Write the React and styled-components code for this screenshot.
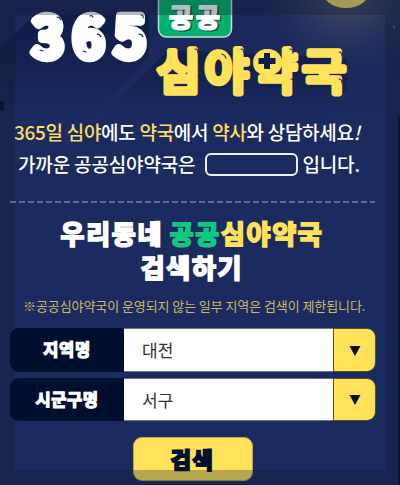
import React, { useState } from "react";
import styled, { createGlobalStyle } from "styled-components";

const Global = createGlobalStyle`
  * { box-sizing: border-box; }
  body {
    margin: 0;
    background: #1b2a5e;
    font-family: "Noto Sans CJK KR", sans-serif;
    overflow: hidden;
  }
`;

const Page = styled.main`
  position: relative;
  width: 400px;
  height: 485px;
  overflow: hidden;
  color: #fff;
  background: linear-gradient(90deg, transparent 398px, #0b1538 398px), #1b2a5f;
`;

const Frame = styled.div`
  position: absolute;
  inset: 0;
  z-index: 1;
  border: 15px solid rgba(16, 26, 48, 0.3);
  pointer-events: none;
`;

const Hero = styled.header`
  height: 116px;
`;

const Artwork = styled.svg`
  display: block;
  font-family: "Noto Sans CJK KR", sans-serif;
  font-weight: 700;
`;

const Content = styled.div`
  position: relative;
  z-index: 2;
  display: flex;
  flex-direction: column;
`;

const Intro = styled.section`
  height: 85px;
  margin-left: 14px;
  font-size: 19px;
  font-weight: 500;
  white-space: nowrap;
`;

const IntroLine = styled.div`
  display: flex;
  align-items: center;
  height: 32px;
  padding-left: ${(p) => p.$indent || 0}px;
  line-height: 32px;
  letter-spacing: ${(p) => p.$spacing}px;
  white-space: pre;
  & em { color: #fbdc65; font-style: normal; }
  & i { font-style: italic; }
`;

const Blank = styled.span`
  width: 93px;
  height: 23px;
  margin: 0 4px 0 10px;
  border: 2px solid #edf0f8;
  border-radius: 6px;
`;

const Divider = styled.div`
  height: 2px;
  margin: 0 25px 0 10px;
  background: repeating-linear-gradient(90deg, #5e6a94 0 6px, transparent 6px 9px);
`;

const Heading = styled.h1`
  display: flex;
  flex-direction: column;
  align-items: center;
  margin: 13px 16px 0 0;
  font-size: 26px;
  font-weight: 700;
  line-height: 34px;
  letter-spacing: 1.7px;
  word-spacing: -1px;
  -webkit-text-stroke: 1.9px currentColor;
  white-space: pre;
`;

const Tint = styled.span`
  color: ${(p) => p.$color};
  -webkit-text-stroke-color: ${(p) => p.$color};
`;

const Notice = styled.p`
  height: 20px;
  margin: 12px 0 12px 23px;
  color: #cdbb65;
  font-size: 13px;
  line-height: 20px;
  letter-spacing: -0.08px;
  white-space: nowrap;
`;

const Fields = styled.div`
  display: grid;
  gap: 6px;
  margin: 0 24px 0 10px;
`;

const Field = styled.div`
  display: grid;
  grid-template-columns: 114px 209px 43px;
  height: 43.5px;
  overflow: hidden;
  border-radius: 9px;
  background: #000f2e;
`;

const FieldLabel = styled.span`
  display: flex;
  align-items: center;
  justify-content: center;
  padding-bottom: 1px;
  font-size: 16.5px;
  font-weight: 700;
  letter-spacing: 0.6px;
  -webkit-text-stroke: 1.3px #fff;
`;

const FieldValue = styled.span`
  display: flex;
  align-items: center;
  padding-left: 18px;
  border: solid #6f7280;
  border-width: 1px 0;
  background: #fff;
  color: #303030;
  font-size: 17px;
  font-weight: 400;
`;

const Toggle = styled.button`
  display: grid;
  place-items: center;
  padding: 2px 0 0;
  border: 1px solid #59511f;
  border-radius: 0 9px 9px 0;
  background: #ffe15a;
`;

const Search = styled.button`
  position: relative;
  display: flex;
  align-items: center;
  justify-content: center;
  width: 120px;
  height: 44px;
  margin: 16px 0 0 132.5px;
  padding: 0 0 3px;
  border: 1px solid #b9a85a;
  border-radius: 9px;
  background: #ffe15a;
  color: #000f2e;
  font: 700 22px "Noto Sans CJK KR", sans-serif;
  letter-spacing: 1.4px;
  -webkit-text-stroke: 2.1px #000f2e;
`;

function Wordmark() {
  return (
    <Artwork width="400" height="116" viewBox="0 0 400 116">
      <defs>
        <linearGradient id="sky" x1="0" y1="0" x2="0" y2="1">
          <stop offset="0" stopColor="#1a2759" />
          <stop offset="1" stopColor="#1b2a5f" />
        </linearGradient>
        <linearGradient id="shade" x1="0" y1="0" x2="0" y2="1">
          <stop offset="0" stopColor="#101c49" />
          <stop offset="1" stopColor="#101c49" stopOpacity="0" />
        </linearGradient>
        <radialGradient id="glow" cx="346" cy="-12" r="85" gradientUnits="userSpaceOnUse">
          <stop offset="0" stopColor="#70715f" stopOpacity=".65" />
          <stop offset="1" stopColor="#38456d" stopOpacity="0" />
        </radialGradient>
      </defs>
      <rect width="400" height="116" fill="url(#sky)" />
      <path d="M34 15L0 49V116H94L149 57V15Z" fill="url(#shade)" />
      <path d="M168 50L102 116H322L347 91V58Z" fill="url(#shade)" />
      <rect y="101" width="4" height="10" fill="#091331" />
      <rect x="240" width="160" height="80" fill="url(#glow)" />
      <ellipse cx="346" cy="-12" rx="25" ry="20" fill="#e8d365" />
      <circle cx="394" cy="27" r="1.3" fill="#59627a" />
      <rect x="158.5" y="-20" width="73" height="57" rx="8" fill="#00b06c" stroke="#c7dcda" strokeWidth="1.5" />
      <g strokeLinejoin="round" strokeLinecap="round">
        <text x="169 196" y="26.5" fontSize="26" fill="#174a43" stroke="#174a43" strokeWidth="2" transform="translate(1.500 1.500)">공공</text>
        <text x="169 196" y="26.5" fontSize="26" fill="#fff" stroke="#fff" strokeWidth="2">공공</text>
        <text x="48 88.5 130" y="56.5" fontSize="55" fontWeight="500" textAnchor="middle" fill="#fff" stroke="#fff" strokeWidth="8.5">365</text>
        <text x="156.5 204.5 253 302" y="88.5" fontSize="48" fontWeight="500" fill="#ffe15a" stroke="#ffe15a" strokeWidth="5.5">심야약국</text>
      </g>
      <circle cx="267" cy="61" r="12" fill="#ffe15a" />
      <path d="M267 53v16M258.500 61h17" stroke="#111d49" strokeWidth="6" />
      <g fill="none" stroke="#182652" strokeWidth="1.1" strokeLinecap="round">
        <path d="M57 17q3 0 4 3M40 50l3 1M90 16q2-1 3 1M97 34q3 0 4 3M83 51l3 1M141 15q3 0 2 3M139 34q3 0 4 3" />
        <path d="M195 49q3 0 3 4M222 54q3 1 4 4M241 49q3 0 3 4M290 49q3 0 3 4M339 52q3 0 3 4M291 79q3 0 3 4M339 79q3 0 3 4" />
      </g>
    </Artwork>
  );
}

function SelectField({ label, options }) {
  const [index, setIndex] = useState(0);
  return (
    <Field>
      <FieldLabel>{label}</FieldLabel>
      <FieldValue>{options[index]}</FieldValue>
      <Toggle aria-label={label} onClick={() => setIndex((index + 1) % options.length)}>
        <svg width="12" height="10" viewBox="0 0 12 10">
          <path d="M.5 0h11L6 10z" fill="#07101f" />
        </svg>
      </Toggle>
    </Field>
  );
}

export default function App() {
  return (
    <>
      <Global />
      <Page>
        <Hero><Wordmark /></Hero>
        <Content>
          <Intro>
            <IntroLine $spacing={-0.3}>
              <span><em>365일 심야</em>에도 <em>약국</em>에서 <em>약사</em>와 상담하세요<i>!</i></span>
            </IntroLine>
            <IntroLine $indent={4} $spacing={-0.15}>
              <span>가까운 공공심야약국은</span><Blank /><span>입니다.</span>
            </IntroLine>
          </Intro>
          <Divider />
          <Heading>
            <span>우리동네 <Tint $color="#10c980">공공</Tint><Tint $color="#ffe15a">심야약국</Tint></span>
            <span>검색하기</span>
          </Heading>
          <Notice>※공공심야약국이 운영되지 않는 일부 지역은 검색이 제한됩니다.</Notice>
          <Fields>
            <SelectField label="지역명" options={["대전"]} />
            <SelectField label="시군구명" options={["서구"]} />
          </Fields>
        </Content>
        <Search>검색</Search>
        <Frame />
      </Page>
    </>
  );
}
